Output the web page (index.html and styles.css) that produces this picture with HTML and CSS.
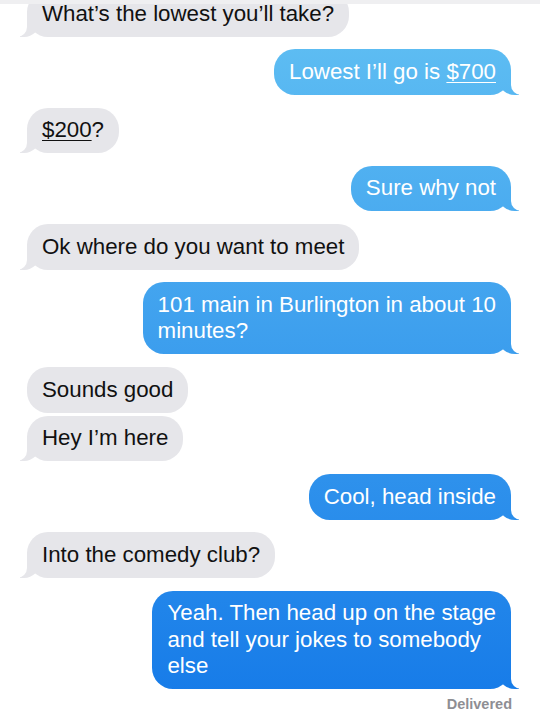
FILE: index.html
```html
<!DOCTYPE html>
<html lang="en">
<head>
  <meta charset="UTF-8">
  <meta name="viewport" content="width=device-width, initial-scale=1.0">
  <title>Messages</title>
  <link rel="stylesheet" href="styles.css">
</head>
<body>
  <div class="topbar"></div>

  <div class="thread">
    <div class="msg them">What’s the lowest you’ll take?</div>
    <div class="msg me">Lowest I’ll go is <span class="link">$700</span></div>
    <div class="msg them"><span class="link">$200</span>?</div>
    <div class="msg me">Sure why not</div>
    <div class="msg them">Ok where do you want to meet</div>
    <div class="msg me">101 main in Burlington in about 10<br>minutes?</div>
    <div class="msg them no-tail">Sounds good</div>
    <div class="msg them grouped">Hey I’m here</div>
    <div class="msg me">Cool, head inside</div>
    <div class="msg them">Into the comedy club?</div>
    <div class="msg me">Yeah. Then head up on the stage<br>and tell your jokes to somebody<br>else</div>
    <div class="status">Delivered</div>
  </div>
</body>
</html>
```

FILE: styles.css
```css
body {
  margin: 0;
  background: #ffffff;
  font-family: "Liberation Sans", Arial, sans-serif;
  overflow: hidden;
}

.topbar {
  position: fixed;
  top: 0;
  left: 0;
  right: 0;
  height: 4px;
  background: #efeff1;
  z-index: 2;
}

.thread {
  display: flex;
  flex-direction: column;
  margin-top: -9px;
  padding: 0 29px 0 27px;
}

.msg {
  position: relative;
  padding: 9.5px 15px;
  border-radius: 21px;
  font-size: 22.3px;
  line-height: 26.5px;
  white-space: nowrap;
}
.msg + .msg { margin-top: 12.8px; }
.msg.grouped { margin-top: 3px; }

/* tails */
.msg::before,
.msg::after {
  content: "";
  position: absolute;
  bottom: 0;
  height: 22px;
}

.them {
  align-self: flex-start;
  background: #e6e6ea;
  color: #111111;
}
.them::before {
  left: -7px;
  width: 20px;
  background: #e6e6ea;
  border-bottom-right-radius: 16px;
}
.them::after {
  left: -26px;
  width: 26px;
  background: #ffffff;
  border-bottom-right-radius: 10px;
}
.them.no-tail::before,
.them.no-tail::after { display: none; }

.me {
  align-self: flex-end;
  color: #ffffff;
  background: linear-gradient(to bottom, #62c1f3, #1479e8) fixed;
}
.me::before {
  right: -8px;
  width: 20px;
  background: linear-gradient(to bottom, #62c1f3, #1479e8) fixed;
  border-bottom-left-radius: 16px 14px;
}
.me::after {
  right: -26px;
  width: 26px;
  background: #ffffff;
  border-bottom-left-radius: 10px;
}

.link {
  text-decoration: underline;
  text-decoration-thickness: 1px;
  text-underline-offset: 3px;
}

.status {
  align-self: flex-end;
  margin: 7px -1px 0 0;
  font-size: 14.5px;
  font-weight: bold;
  color: #8e8e93;
}
```
